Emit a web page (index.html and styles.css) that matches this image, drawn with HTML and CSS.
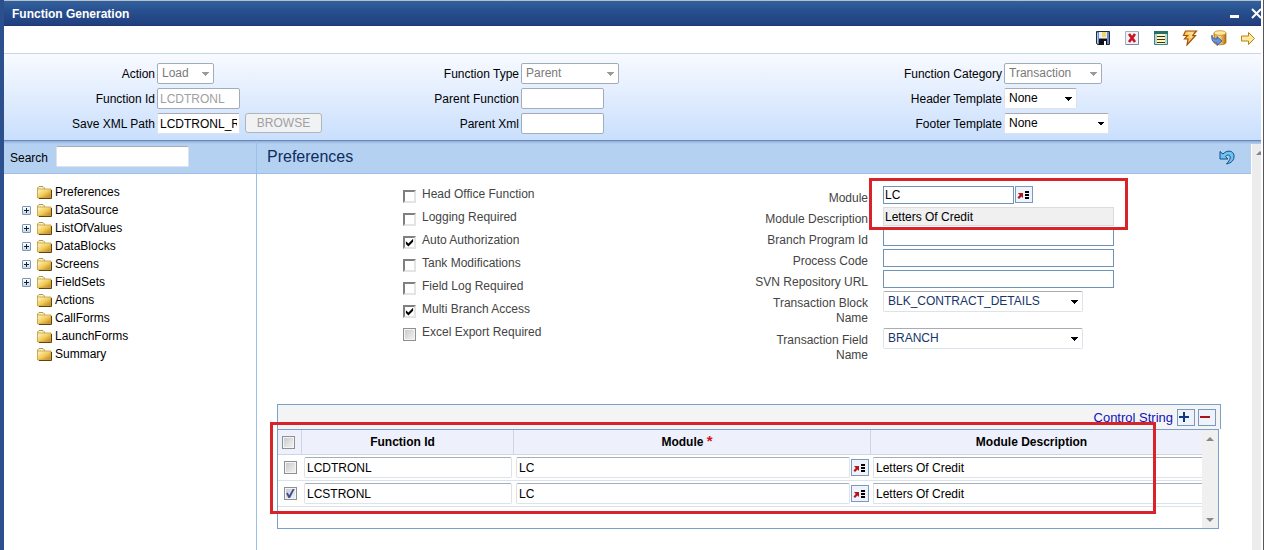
FILE: index.html
```html
<!DOCTYPE html>
<html lang="en">
<head>
<meta charset="UTF-8">
<title>Function Generation</title>
<link rel="stylesheet" href="styles.css">
</head>
<body>
<svg class="defs" width="0" height="0">
	<defs>
		<linearGradient id="gold" x1="0" y1="0" x2="1" y2="1">
			<stop offset="0" stop-color="#fff6c8"/><stop offset=".5" stop-color="#f3cd5c"/><stop offset="1" stop-color="#b87a12"/>
		</linearGradient>
		<linearGradient id="barrel" x1="0" y1="0" x2="1" y2="0">
			<stop offset="0" stop-color="#e0a020"/><stop offset=".4" stop-color="#ffe69a"/><stop offset="1" stop-color="#b26f08"/>
		</linearGradient>
	</defs>
	<symbol id="folder" viewBox="0 0 15 13">
		<path d="M.5 3.500V2L2 .5h4L7.500 2v1.500" fill="#fdf3c0" stroke="#b09a4c"/>
		<path d="M.5 3h13.500v9H.5z" fill="url(#gold)" stroke="#c9ab58"/>
		<path d="M14.500 4v8.500H2" fill="none" stroke="#5e4510"/>
	</symbol>
	<symbol id="lookup" viewBox="0 0 16 15">
		<path d="M2 6h5v5L5.500 9.500 3 12 1.500 10.500 3.800 8z" fill="#b5121b"/>
		<path d="M9 4h4v2H9zM9 7h4v2H9zM9 10h4v2H9z" fill="#000"/>
	</symbol>
</svg>

<div class="window">
	<div class="titlebar">
		<h1>Function Generation</h1>
		<button class="min" title="Minimize"></button>
		<button class="close" title="Close"><svg width="11" height="11" viewBox="0 0 11 11"><path d="M1 1l9 9M10 1l-9 9" stroke="#fff" stroke-width="2"/></svg></button>
	</div>

	<div class="toolbar">
		<button title="Save"><svg viewBox="0 0 16 16"><path d="M1.500 1.500h13v13h-12l-1-1z" fill="#7189b8" stroke="#1c2a4c"/><path d="M4 2h8v6H4z" fill="#e9edf5"/><path d="M7 2h4v5H7z" fill="#f3d568"/><path d="M4 9h8v6H4z" fill="#111"/><path d="M9 11h2v4H9z" fill="#fff"/><path d="M2.500 3v10" stroke="#b9c8e6"/></svg></button>
		<button title="Close"><svg viewBox="0 0 16 16"><path d="M1.500 1.500h13v13h-13z" fill="#eef2f9" stroke="#a5b1c6"/><path d="M14.500 2v12.500H2" fill="none" stroke="#7c8aa6"/><path d="M5 4l6 8M11 4l-6 8" stroke="#c8141e" stroke-width="2.600"/></svg></button>
		<button title="Fields"><svg viewBox="0 0 16 16"><path d="M1.500 1.500h13v13h-13z" fill="#fff6c4" stroke="#3d8482"/><path d="M1 1h14v3H1z" fill="#23706d"/><path d="M2 4h2v10H2zM12 4h2v10h-2z" fill="#b9d6d2"/><path d="M4 6.500h8M4 9.500h8M4 12.500h8" stroke="#3b3310"/></svg></button>
		<button title="Generate"><svg viewBox="0 0 16 16"><path d="M3.500 1h11L10.500 5.500h3L5 15l1-6H2.500l3-3.500H1.500z" fill="#f9c95c" stroke="#a3530c" stroke-width="1.200"/><path d="M6 3h5L8 7h2" fill="none" stroke="#fff1b8"/></svg></button>
		<button title="Deploy"><svg viewBox="0 0 16 16"><path d="M3 3v9.500c0 3 12 3 12 0V3z" fill="url(#barrel)" stroke="#a76b0c" stroke-width=".7"/><ellipse cx="9" cy="3" rx="6" ry="2.300" fill="#ffe9a3" stroke="#bb8014" stroke-width=".7"/><path d="M1 5c0 3 2 4 5 4V6.500l5 4.500-5 4.500V13c-4 0-6-3-5-8z" fill="#6c92de" stroke="#2c4f9c" stroke-width=".8"/></svg></button>
		<button title="Next"><svg viewBox="0 0 16 16"><path d="M1.500 6h7V2.500L14.500 8.500l-6 6V11h-7z" fill="#ffe9a0" stroke="#b98217"/></svg></button>
	</div>

	<div class="header">
		<div class="fields">
			<label for="action">Action</label>
			<select id="action" class="w-action" disabled><option>Load</option></select>
			<label for="function_id">Function Id</label>
			<input type="text" id="function_id" class="w-text" value="LCDTRONL" disabled>
			<label for="xml_path">Save XML Path</label>
			<span class="browse"><input type="text" id="xml_path" class="w-text" value="LCDTRONL_RAD.xml"><button disabled>BROWSE</button></span>
		</div>
		<div class="fields">
			<label for="function_type">Function Type</label>
			<select id="function_type" class="w-type" disabled><option>Parent</option></select>
			<label for="parent_function">Parent Function</label>
			<input type="text" id="parent_function" class="w-text" disabled>
			<label for="parent_xml">Parent Xml</label>
			<input type="text" id="parent_xml" class="w-text" disabled>
		</div>
		<div class="fields">
			<label for="category">Function Category</label>
			<select id="category" class="w-type" disabled><option>Transaction</option></select>
			<label for="header_tpl">Header Template</label>
			<select id="header_tpl" class="w-header"><option>None</option></select>
			<label for="footer_tpl">Footer Template</label>
			<select id="footer_tpl" class="w-footer"><option>None</option></select>
		</div>
	</div>

	<div class="body">
		<div class="sidebar">
			<div class="band">
				<label for="search">Search</label>
				<input type="text" id="search">
			</div>
			<ul class="tree">
				<li><a href="#"><svg><use href="#folder"/></svg>Preferences</a></li>
				<li><button title="Expand"></button><a href="#"><svg><use href="#folder"/></svg>DataSource</a></li>
				<li><button title="Expand"></button><a href="#"><svg><use href="#folder"/></svg>ListOfValues</a></li>
				<li><button title="Expand"></button><a href="#"><svg><use href="#folder"/></svg>DataBlocks</a></li>
				<li><button title="Expand"></button><a href="#"><svg><use href="#folder"/></svg>Screens</a></li>
				<li><button title="Expand"></button><a href="#"><svg><use href="#folder"/></svg>FieldSets</a></li>
				<li><a href="#"><svg><use href="#folder"/></svg>Actions</a></li>
				<li><a href="#"><svg><use href="#folder"/></svg>CallForms</a></li>
				<li><a href="#"><svg><use href="#folder"/></svg>LaunchForms</a></li>
				<li><a href="#"><svg><use href="#folder"/></svg>Summary</a></li>
			</ul>
		</div>

		<div class="main">
			<div class="band">
				<h2>Preferences</h2>
				<button class="undo" title="Undo"><svg width="16" height="16" viewBox="0 0 16 16"><path d="M1 2.500V10h8L6.500 7.500C9 5 11.500 6 11.200 9c-.3 2-1.700 3.500-3.700 6 5-1 8-4 7.500-8.500C14.500 1.500 8 .5 4 5z" fill="#6cc4f4" stroke="#17497f"/></svg></button>
			</div>

			<div class="prefs">
				<div class="checks">
					<label><input type="checkbox">Head Office Function</label>
					<label><input type="checkbox">Logging Required</label>
					<label><input type="checkbox" checked>Auto Authorization</label>
					<label><input type="checkbox">Tank Modifications</label>
					<label><input type="checkbox">Field Log Required</label>
					<label><input type="checkbox" checked>Multi Branch Access</label>
					<label><input type="checkbox" class="soft">Excel Export Required</label>
				</div>

				<div class="details">
					<label for="module">Module</label>
					<span class="lov"><input type="text" id="module" value="LC"><button class="lookup" title="List of values"><svg><use href="#lookup"/></svg></button></span>
					<label for="module_desc">Module Description</label>
					<input type="text" id="module_desc" value="Letters Of Credit" readonly>
					<label for="branch_program">Branch Program Id</label>
					<input type="text" id="branch_program">
					<label for="process_code">Process Code</label>
					<input type="text" id="process_code">
					<label for="svn_url">SVN Repository URL</label>
					<input type="text" id="svn_url">
					<label for="txn_block">Transaction Block Name</label>
					<select id="txn_block"><option>BLK_CONTRACT_DETAILS</option></select>
					<label for="txn_field">Transaction Field Name</label>
					<select id="txn_field"><option>BRANCH</option></select>
					<div class="mark mark-module"></div>
				</div>
			</div>

			<div class="grid">
				<div class="grid-bar">
					<a href="#">Control String</a>
					<button class="add" title="Add row"><svg width="16" height="15" viewBox="0 0 16 15"><path d="M1 7h10M6 2v10" stroke="#0b3a82" stroke-width="2"/></svg></button>
					<button class="del" title="Delete row"><svg width="16" height="15" viewBox="0 0 16 15"><path d="M1 7h10" stroke="#a8121a" stroke-width="2"/></svg></button>
				</div>
				<div class="grid-body">
					<table>
						<colgroup><col class="c-check"><col class="c-id"><col class="c-module"><col></colgroup>
						<thead>
							<tr>
								<th class="c-check"><input type="checkbox" class="soft" aria-label="Select all"></th>
								<th>Function Id</th>
								<th>Module <span class="req">*</span></th>
								<th>Module Description</th>
							</tr>
						</thead>
						<tbody>
							<tr>
								<td><input type="checkbox" class="soft" aria-label="Select LCDTRONL"></td>
								<td><input type="text" value="LCDTRONL" aria-label="Function Id"></td>
								<td><span class="lov"><input type="text" value="LC" aria-label="Module"><button class="lookup" title="List of values"><svg><use href="#lookup"/></svg></button></span></td>
								<td class="open"><input type="text" value="Letters Of Credit" aria-label="Module Description"></td>
							</tr>
							<tr>
								<td><input type="checkbox" class="soft" checked aria-label="Select LCSTRONL"></td>
								<td><input type="text" value="LCSTRONL" aria-label="Function Id"></td>
								<td><span class="lov"><input type="text" value="LC" aria-label="Module"><button class="lookup" title="List of values"><svg><use href="#lookup"/></svg></button></span></td>
								<td class="open"><input type="text" value="Letters Of Credit" aria-label="Module Description"></td>
							</tr>
						</tbody>
					</table>
					<div class="scroll"><i class="up"></i><i class="down"></i></div>
				</div>
				<div class="mark mark-grid"></div>
			</div>
		</div>
		<div class="page-scroll"><i class="up"></i></div>
	</div>
</div>
</body>
</html>
```

FILE: styles.css
```css
*{
	box-sizing: border-box;
}

body{
	margin: 0;
	background: #fff;
	font: 12px/15px "Liberation Sans", Arial, sans-serif;
	color: #000;
}

input, select, button{
	margin: 0;
	font: inherit;
	color: inherit;
}

button{
	padding: 0;
	border: 0;
	background: none;
}

svg{
	display: block;
}

svg.defs{
	position: absolute;
}

.window{
	display: flex;
	flex-direction: column;
	min-height: 100vh;
	padding-right: 2px;
	border-left: 4px solid #2c4f8d;
	border-right: 1px solid #55575c;
}

/* title bar */
.titlebar{
	display: flex;
	align-items: center;
	height: 26px;
	padding-left: 8px;
	border-top: 1px solid #b9c0c4;
	border-bottom: 1px solid #1b3670;
	background: linear-gradient(#33619f, #28508f 40%, #213f7f);
	color: #fff;
	overflow: hidden;
}

.titlebar h1{
	flex: 1;
	margin: 0;
	padding-top: 2px;
	font-size: 12px;
}

.titlebar .min{
	width: 9px;
	height: 3px;
	margin: 6px 12px 0 0;
	background: #fff;
}

.titlebar .close{
	margin-right: -1px;
}

/* icons */
.toolbar{
	display: flex;
	justify-content: flex-end;
	align-items: center;
	gap: 13px;
	height: 28px;
	padding: 0 5px 4px 0;
	border-bottom: 1px solid #c5d8e8;
}

.toolbar svg{
	width: 16px;
	height: 16px;
}

/* header fields */
.header{
	display: grid;
	grid-template-columns: 364fr 483fr 410fr;
	padding: 9px 0 6px;
	background: linear-gradient(#f8faff, #c9dffd);
}

.fields{
	display: grid;
	grid-template-columns: 151px auto;
	grid-auto-rows: 21px;
	justify-content: start;
	gap: 4px 2px;
}

.fields label{
	line-height: 22px;
	text-align: right;
}

input[type=text], select{
	height: 21px;
	padding: 0 2px;
	border: 1px solid;
	border-color: #a9adb3 #dde3ea #dde3ea #dde3ea;
	border-radius: 2px;
	background-color: #fff;
}

select{
	appearance: none;
	padding: 0 4px;
	background-image: linear-gradient(45deg, transparent 50%, #000 50%), linear-gradient(135deg, #000 50%, transparent 50%);
	background-repeat: no-repeat;
	background-size: 4px 4px;
	background-position: right 7px center, right 3px center;
}

.header input:disabled, .header select:disabled{
	border-color: #a3adba;
	color: #a0a0a0;
	opacity: 1;
}

.header select:disabled{
	color: #7a7a7a;
	background-image: linear-gradient(45deg, transparent 50%, #9a9a9a 50%), linear-gradient(135deg, #9a9a9a 50%, transparent 50%);
}

.w-action{width: 57px}
.w-text{width: 83px}
.w-type{width: 98px}
.w-header{width: 73px}
.w-footer{width: 105px}

.browse{
	display: flex;
	gap: 5px;
}

.browse button{
	width: 77px;
	height: 20px;
	border: 1px solid #b0b5bb;
	border-radius: 3px;
	background: #f1f2f4;
	color: #a0a0a0;
}

/* body */
.body{
	display: flex;
	flex: 1;
	border-top: 1px solid #6887b8;
	background: linear-gradient(#8faed7, #b4d1f1 3px, #fff 3px);
}

.band{
	display: flex;
	align-items: center;
	height: 33px;
	border-bottom: 1px solid #9dbfe5;
	background: linear-gradient(#8faed7, #b4d1f1 3px);
}

.sidebar{
	width: 253px;
	border-right: 1px solid #9dbfe5;
}

.sidebar .band{
	gap: 8px;
	padding-left: 6px;
}

.sidebar .band label{
	padding-top: 2px;
}

#search{
	width: 133px;
	margin-bottom: 2px;
}

.tree{
	margin: 0;
	padding: 9px 0 0 18px;
	list-style: none;
}

.tree li{
	display: flex;
	align-items: center;
	height: 18px;
}

.tree a{
	display: flex;
	align-items: center;
	gap: 3px;
	margin-left: auto;
	width: 219px;
	color: #000;
	text-decoration: none;
}

.tree a svg{
	width: 15px;
	height: 13px;
}

.tree button{
	width: 9px;
	height: 9px;
	border: 1px solid #7b98b9;
	border-radius: 1px;
	background:
		linear-gradient(#123, #123) center / 5px 1px no-repeat,
		linear-gradient(#123, #123) center / 1px 5px no-repeat,
		linear-gradient(#fff, #ccd6e6);
}

.main{
	flex: 1;
	min-width: 0;
}

.main .band{
	justify-content: space-between;
	padding: 0 16px 0 10px;
}

.main h2{
	margin: 0;
	font-size: 16px;
	font-weight: normal;
	line-height: 20px;
	color: #0e2c5e;
}

.prefs{
	display: grid;
	grid-template-columns: 345fr 503fr;
	padding: 12px 0 0 146px;
	color: #444;
}

.checks label{
	display: flex;
	gap: 6px;
	height: 23px;
	padding-top: 1px;
}

.checks input{
	margin-top: 3px;
}

input[type=checkbox]{
	appearance: none;
	flex: none;
	width: 13px;
	height: 13px;
	border: 2px solid;
	border-color: #808080 #e4e4e4 #e4e4e4 #808080;
	background: #fff;
}

input[type=checkbox]:checked::before{
	content: "";
	display: block;
	width: 9px;
	height: 9px;
	background: #000;
	clip-path: polygon(10% 35%, 38% 60%, 90% 8%, 90% 42%, 38% 95%, 10% 68%);
}

input[type=checkbox].soft{
	border: 1px solid #8e8f8f;
	background: linear-gradient(135deg, #c4c8cc, #f4f4f4);
	box-shadow: inset 0 0 0 1px #f4f4f4;
}

input[type=checkbox].soft:checked::before{
	width: 11px;
	height: 11px;
	background: #3c4f96;
	clip-path: polygon(15% 50%, 30% 42%, 42% 65%, 75% 8%, 92% 8%, 50% 92%, 36% 92%);
}

.details{
	position: relative;
	display: grid;
	grid-template-columns: 120px 231px;
	grid-auto-rows: minmax(21px, auto);
	align-items: start;
	justify-content: start;
	column-gap: 15px;
}

.details label{
	padding: 5px 0 1px;
	text-align: right;
}

.details input{
	height: 18px;
	border: 1px solid #6f93b4;
	border-radius: 0;
	padding: 0 1px;
	color: #000;
}

.details input[readonly]{
	height: 19px;
	border-color: #dcdcdc;
	background: #f0f0f0;
}

.details select{
	width: 200px;
	margin-bottom: 16px;
	color: #15366b;
}

.lov{
	display: flex;
	gap: 1px;
}

#module{
	width: 131px;
}

.lookup, .grid-bar button{
	width: 18px;
	height: 17px;
	border: 1px solid #7b98be;
	background: #edf2fb;
}

.lookup svg{
	width: 16px;
	height: 15px;
}

/* callout frames */
.mark{
	position: absolute;
	border: 3px solid #d8232a;
	pointer-events: none;
}

.mark-module{
	top: -8px;
	left: 121px;
	width: 259px;
	height: 52px;
}

.mark-grid{
	top: 18px;
	left: -7px;
	right: 65px;
	height: 92px;
}

/* multi record block */
.grid{
	position: relative;
	margin: 39px 30px 0 20px;
}

.grid-bar{
	display: flex;
	justify-content: flex-end;
	align-items: center;
	gap: 3px;
	height: 25px;
	padding-right: 4px;
	border: 1px solid #7ba0cc;
	border-bottom: 0;
	background: #f4f4f5;
}

.grid-bar a{
	padding-right: 1px;
	font-size: 13px;
	color: #1111b8;
	text-decoration: none;
}

.grid-body{
	display: flex;
	height: 100px;
	margin-right: 2px;
	border: 1px solid #7ba0cc;
}

.grid table{
	flex: 1;
	align-self: flex-start;
	table-layout: fixed;
	border-collapse: separate;
	border-spacing: 0;
	width: 0;
}

.c-check{width: 24px}
.c-id{width: 212px}
.c-module{width: 357px}

.grid th{
	height: 25px;
	padding: 0 10px 0 0;
	border-right: 1px solid #cdd6e4;
	border-bottom: 1px solid #cdd6e4;
	background: #eef1fb;
}

.grid th.c-check{
	padding: 0 2px 0 0;
}

.grid th:last-child{
	border-right: 0;
}

.grid th input, .grid td input[type=checkbox]{
	display: block;
	margin: 0 auto;
}

.req{
	font-size: 15px;
	line-height: 12px;
	color: #d0141e;
}

.grid td{
	height: 26px;
	padding: 2px 2px 2px;
	border-bottom: 1px solid #d9e3ee;
}

.grid td input[type=text]{
	display: block;
	width: 100%;
}

.grid td.open{
	padding-right: 0;
}

.grid td.open input{
	border-right: 0;
	border-radius: 0;
}

.grid .lov{
	align-items: center;
}

.grid .lookup{
	flex: none;
}

.scroll{
	display: flex;
	flex-direction: column;
	justify-content: space-between;
	align-items: center;
	width: 16px;
	padding: 7px 0 6px;
	background: #f0f0f1;
}

.up, .down{
	border: 4px solid transparent;
}

.up{
	border-top: 0;
	border-bottom-color: #85878a;
}

.down{
	border-bottom: 0;
	border-top-color: #85878a;
}

.page-scroll{
	display: flex;
	justify-content: flex-end;
	align-items: flex-start;
	width: 10px;
	margin-top: 3px;
	padding-top: 7px;
	border-left: 1px solid #fff;
	background: #ececed;
	overflow: hidden;
}

.page-scroll .up{
	margin-right: -3px;
}
```
